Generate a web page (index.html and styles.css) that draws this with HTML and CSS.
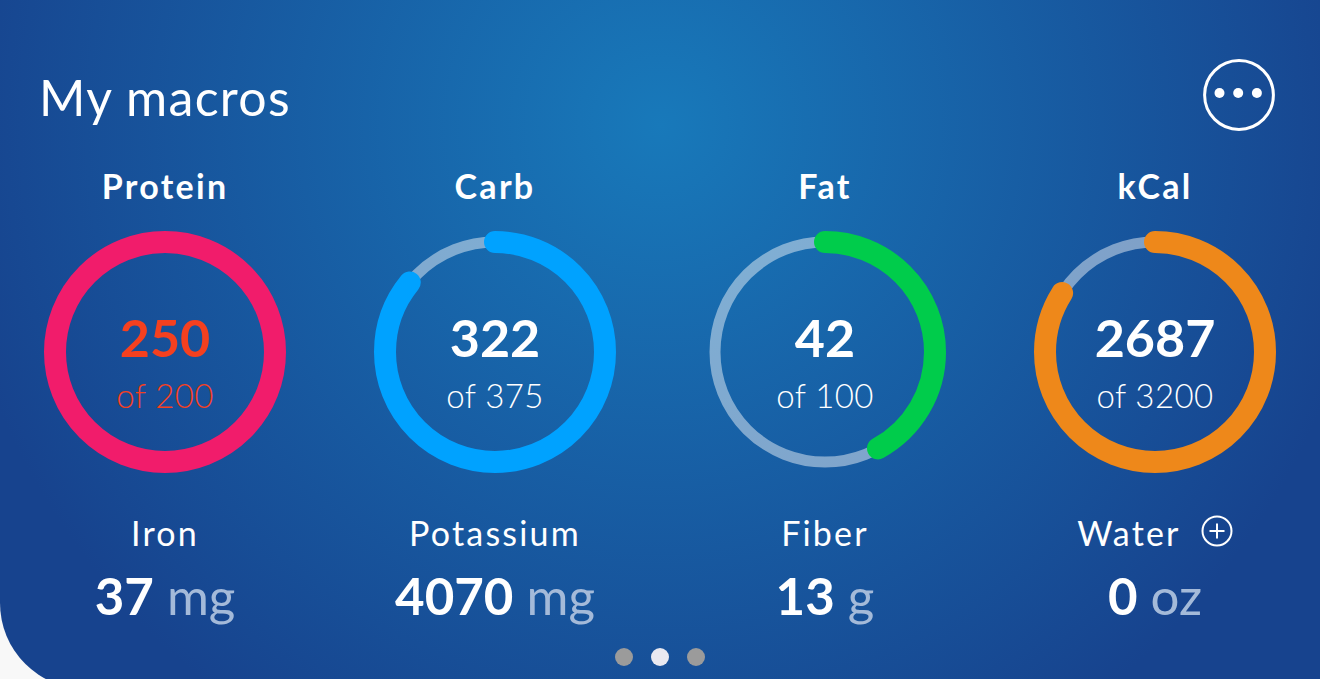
FILE: index.html
```html
<!DOCTYPE html>
<html lang="en">
<head>
<meta charset="utf-8">
<title>My macros</title>
<link rel="stylesheet" href="styles.css">
</head>
<body>
<main class="card">
  <header class="head">
    <h1 class="title">My macros</h1>
    <svg class="more" viewBox="0 0 72 72" role="img" aria-label="More">
      <circle cx="36" cy="36" r="34.4" fill="none" stroke="#fff" stroke-width="3"/>
      <circle cx="16.5" cy="34" r="5" fill="#fff"/>
      <circle cx="35.2" cy="34" r="5" fill="#fff"/>
      <circle cx="53.9" cy="34" r="5" fill="#fff"/>
    </svg>
  </header>
  <section class="macros">
    <div class="macro">
      <h2 class="name">Protein</h2>
      <div class="ring over">
        <svg class="dial" viewBox="0 0 242 242"><circle cx="121" cy="121" r="110" class="fill pink"/></svg>
        <div class="center"><b class="val">250</b><span class="of">of 200</span></div>
      </div>
    </div>
    <div class="macro">
      <h2 class="name">Carb</h2>
      <div class="ring">
        <svg class="dial" viewBox="0 0 242 242">
          <circle cx="121" cy="121" r="110" class="track"/>
          <circle cx="121" cy="121" r="110" class="fill blue" pathLength="100" stroke-dasharray="85.9 100" transform="rotate(-90 121 121)"/>
        </svg>
        <div class="center"><b class="val">322</b><span class="of">of 375</span></div>
      </div>
    </div>
    <div class="macro">
      <h2 class="name">Fat</h2>
      <div class="ring">
        <svg class="dial" viewBox="0 0 242 242">
          <circle cx="121" cy="121" r="110" class="track"/>
          <circle cx="121" cy="121" r="110" class="fill green" pathLength="100" stroke-dasharray="42 100" transform="rotate(-90 121 121)"/>
        </svg>
        <div class="center"><b class="val">42</b><span class="of">of 100</span></div>
      </div>
    </div>
    <div class="macro">
      <h2 class="name">kCal</h2>
      <div class="ring">
        <svg class="dial" viewBox="0 0 242 242">
          <circle cx="121" cy="121" r="110" class="track"/>
          <circle cx="121" cy="121" r="110" class="fill orange" pathLength="100" stroke-dasharray="84 100" transform="rotate(-90 121 121)"/>
        </svg>
        <div class="center"><b class="val">2687</b><span class="of">of 3200</span></div>
      </div>
    </div>

    <div class="stat"><div class="label">Iron</div><div class="amount"><b>37</b> <span>mg</span></div></div>
    <div class="stat"><div class="label">Potassium</div><div class="amount"><b>4070</b> <span>mg</span></div></div>
    <div class="stat"><div class="label">Fiber</div><div class="amount"><b>13</b> <span>g</span></div></div>
    <div class="stat">
      <div class="label">Water
        <svg class="plus" viewBox="0 0 32 32" role="img" aria-label="Add">
          <circle cx="16" cy="16" r="14.5" fill="none" stroke="#fff" stroke-width="2"/>
          <path d="M16 8.5v15M8.5 16h15" fill="none" stroke="#fff" stroke-width="2"/>
        </svg>
      </div>
      <div class="amount"><b>0</b> <span>oz</span></div>
    </div>
  </section>
  <nav class="dots"><i class="dot"></i><i class="dot on"></i><i class="dot"></i></nav>
</main>
</body>
</html>
```
FILE: styles.css
```css
html, body {
  margin: 0;
  height: 679px;
  overflow: hidden;
  background: #f8f8f8;
}
.card {
  box-sizing: border-box;
  height: 689px;
  padding-top: 59px;
  border-bottom-left-radius: 86px;
  background: radial-gradient(circle 720px at 660px 125px, #1879ba 0%, #17438e 100%);
  color: #fff;
  font-family: Lato, sans-serif;
}
.head {
  display: flex;
  justify-content: space-between;
  align-items: center;
  padding: 0 45px 0 39px;
  height: 72px;
}
.title {
  margin: 4px 0 0;
  font-size: 50px;
  line-height: 72px;
  font-weight: 400;
  letter-spacing: 1.3px;
}
.more { width: 72px; height: 72px; }
.macros {
  display: grid;
  grid-template-columns: repeat(4, 330px);
  justify-items: center;
  margin-top: 33px;
}
.macro, .stat { text-align: center; }
.name {
  margin: 0;
  font-size: 34px;
  line-height: 44px;
  font-weight: 700;
  letter-spacing: 2.3px;
}
.ring {
  display: grid;
  place-items: center;
  width: 242px;
  height: 242px;
  margin-top: 23px;
}
.ring > * { grid-area: 1 / 1; }
.dial { width: 242px; height: 242px; }
.track { fill: none; stroke: #fff; stroke-opacity: .45; stroke-width: 11; }
.fill { fill: none; stroke-width: 22; stroke-linecap: round; }
.pink { stroke: #f11c6b; }
.blue { stroke: #00a2ff; }
.green { stroke: #00cc4b; }
.orange { stroke: #ee881a; }
.center { display: flex; flex-direction: column; align-items: center; padding-top: 19px; }
.val { font-size: 52px; line-height: 60px; font-weight: 700; }
.of { font-size: 33px; line-height: 42px; font-weight: 300; margin-top: 7px; letter-spacing: .4px; }
.over .center { color: #f5401f; }
.stat { margin-top: 36px; }
.label {
  font-size: 34px;
  line-height: 48px;
  font-weight: 400;
  letter-spacing: 2.2px;
  display: flex;
  justify-content: center;
  align-items: center;
  gap: 20px;
}
.plus { width: 32px; height: 32px; margin-top: -4px; }
.amount { font-size: 51px; line-height: 64px; margin-top: 7px; }
.amount b { font-weight: 700; }
.amount span { font-weight: 400; color: #a4bad9; }
.dots {
  display: flex;
  justify-content: center;
  gap: 18px;
  margin-top: 20px;
}
.dot { width: 18px; height: 18px; border-radius: 50%; background: #9b9b9b; }
.dot.on { background: #e9e9f1; }
```
